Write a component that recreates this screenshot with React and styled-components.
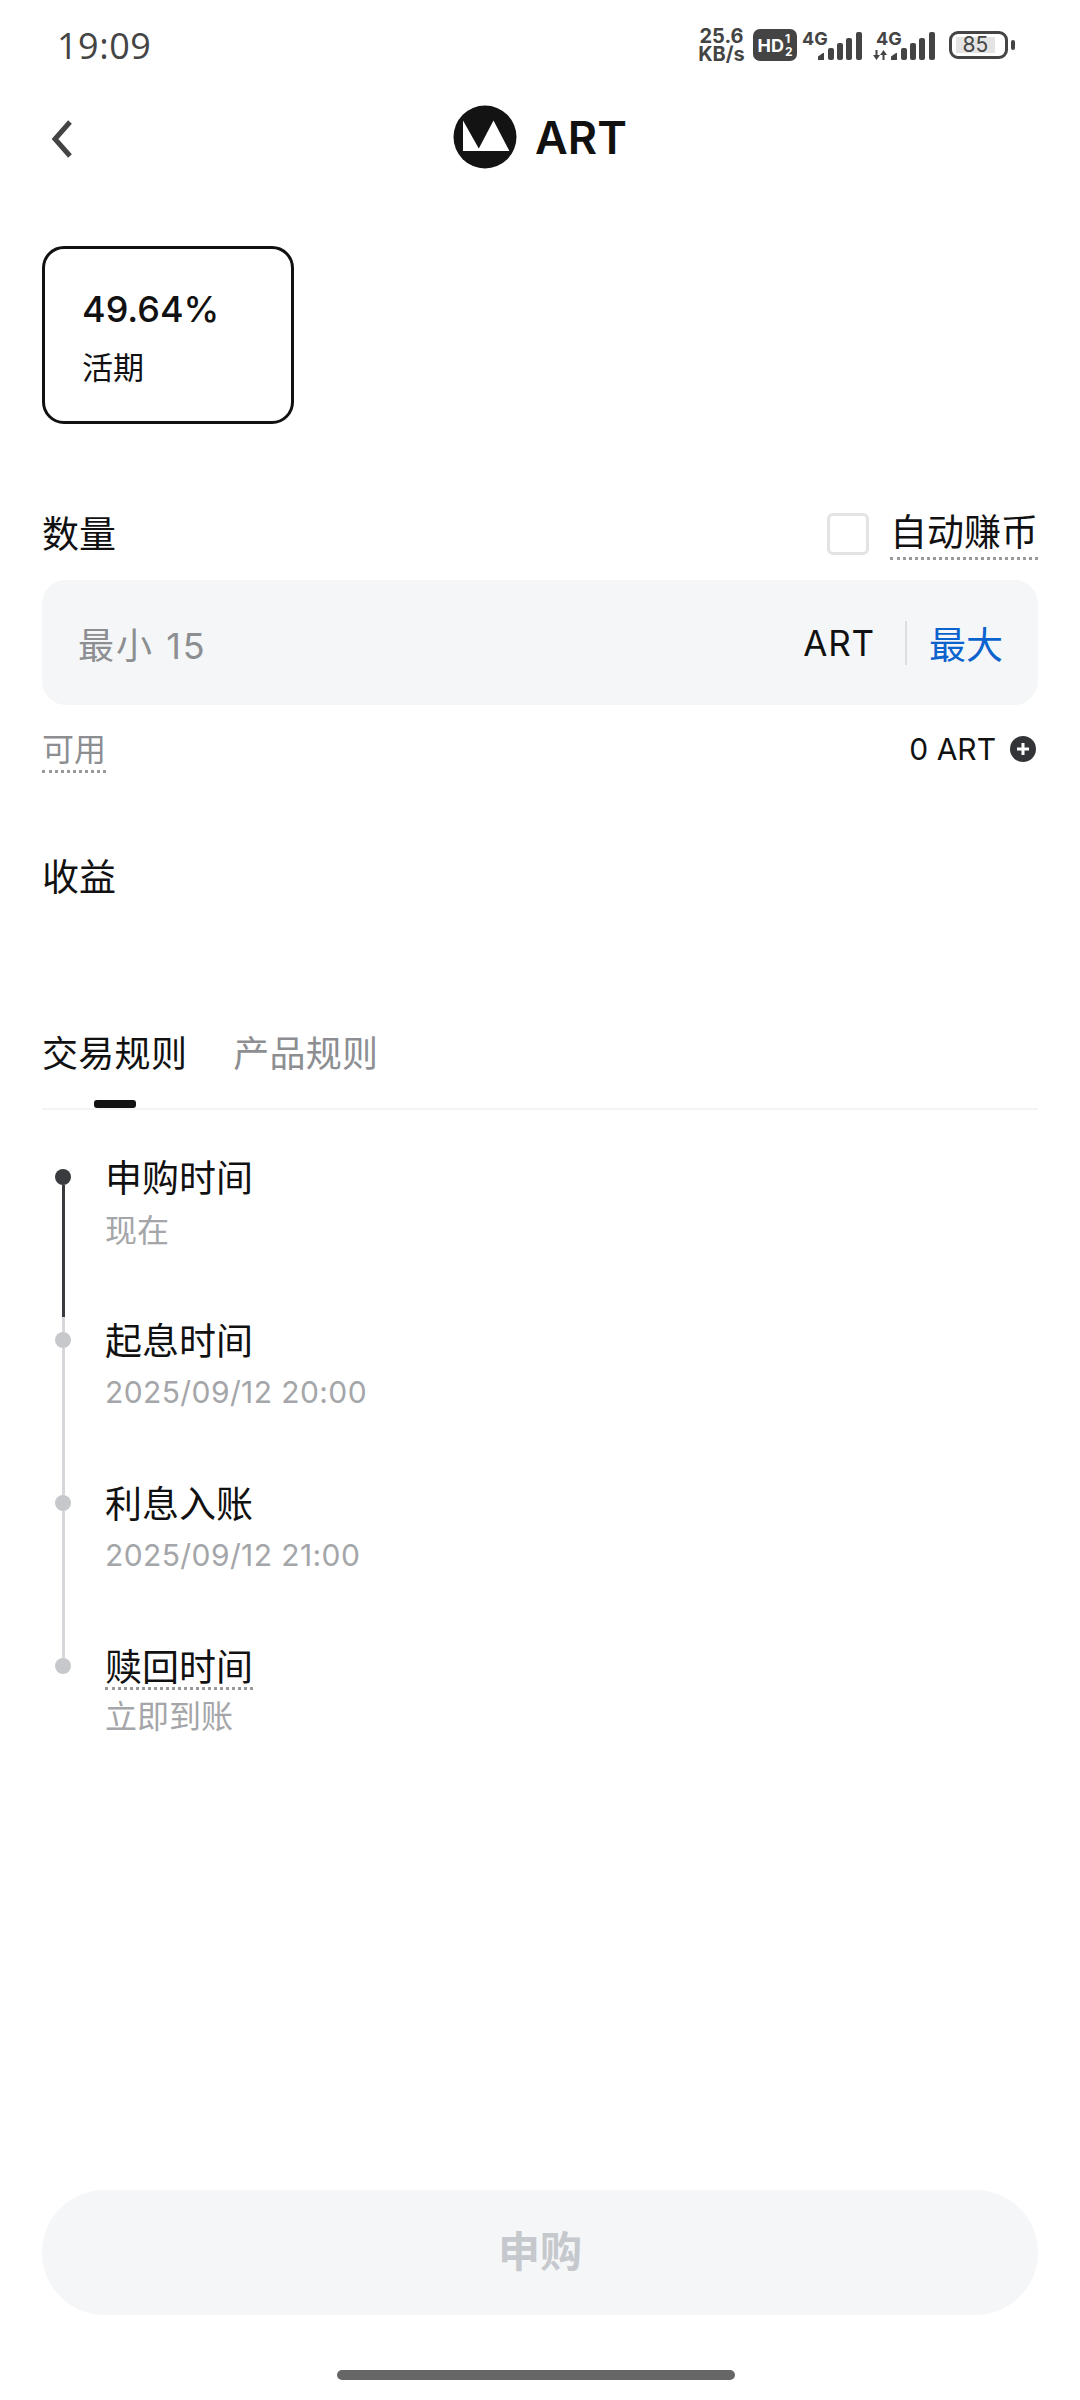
import React from "react";
import styled, { createGlobalStyle } from "styled-components";

const CJK = `Inter, "Noto Sans CJK SC", sans-serif`;

const GlobalStyle = createGlobalStyle`
  html, body {
    margin: 0;
    padding: 0;
    background: #fff;
  }
  body {
    font-family: ${CJK};
    color: #111;
  }
`;

const Page = styled.div`
  width: 1080px;
  height: 2400px;
  display: flex;
  flex-direction: column;
  overflow: hidden;
  background: #fff;
`;

/* status bar */
const StatusBar = styled.div`
  height: 90px;
  display: flex;
  align-items: center;
  justify-content: space-between;
  padding: 0 65px 0 57px;
  box-sizing: border-box;
  color: #444;
`;

const Clock = styled.div`
  font-family: "Open Sans", sans-serif;
  font-size: 36px;
  letter-spacing: 0.5px;
  color: #444;
`;

const StatusIcons = styled.div`
  display: flex;
  align-items: center;
  height: 40px;
`;

const Speed = styled.div`
  width: 47px;
  display: flex;
  flex-direction: column;
  align-items: center;
  font-size: 20px;
  line-height: 18px;
  font-weight: 700;
  color: #444;
  margin-right: 8px;
`;

const SpeedLine = styled.div`
  height: 18px;
`;

const HdBadge = styled.div`
  width: 44px;
  height: 32px;
  border-radius: 7px;
  background: #444;
  color: #fff;
  display: flex;
  align-items: center;
  justify-content: center;
  font-size: 18px;
  font-weight: 700;
  margin-right: 5px;
`;

const HdStack = styled.span`
  display: flex;
  flex-direction: column;
  font-size: 12px;
  line-height: 13px;
  margin-left: 1px;
`;

const Signal = styled.div`
  position: relative;
  width: ${(p) => p.$w}px;
  height: 30px;
  margin-right: ${(p) => p.$mr}px;
  padding-left: ${(p) => p.$pl || 0}px;
  box-sizing: border-box;
  font-size: 18px;
  font-weight: 700;
  line-height: 17px;
  color: #444;
`;

const SignalBars = styled.svg`
  position: absolute;
  right: 0;
  bottom: 0;
`;

const Battery = styled.div`
  display: flex;
  align-items: center;
  gap: 3px;
`;

const BatteryBody = styled.div`
  width: 59px;
  height: 28px;
  box-sizing: border-box;
  border: 3px solid #444;
  border-radius: 9px;
  padding: 3px 4px;
  display: flex;
`;

const BatteryFill = styled.div`
  width: 39px;
  background: #e4e4e4;
  font-size: 21px;
  line-height: 16px;
  text-align: center;
  color: #444;
`;

const BatteryCap = styled.div`
  width: 4px;
  height: 10px;
  border-radius: 2px;
  background: #444;
`;

/* nav */
const NavBar = styled.div`
  height: 96px;
  position: relative;
  display: flex;
  align-items: center;
  justify-content: center;
  gap: 18px;
  margin-top: -1px;
`;

const BackButton = styled.svg`
  position: absolute;
  left: 50px;
  top: 30px;
`;

const CoinName = styled.div`
  font-size: 45px;
  font-weight: 600;
  color: #111;
`;

const Content = styled.div`
  padding: 0 42px;
  display: flex;
  flex-direction: column;
  flex: 1;
`;

const RateCard = styled.div`
  width: 252px;
  height: 178px;
  margin-top: 61px;
  box-sizing: border-box;
  border: 3px solid #111;
  border-radius: 22px;
  padding: 38px 0 0 37px;
`;

const RateValue = styled.div`
  font-size: 36px;
  line-height: 44px;
  font-weight: 500;
`;

const RateLabel = styled.div`
  font-size: 31px;
  line-height: 40px;
  margin-top: 17px;
`;

const AmountHead = styled.div`
  display: flex;
  align-items: center;
  justify-content: space-between;
  height: 59px;
  margin-top: 80px;
`;

const Label = styled.div`
  font-size: 37px;
  line-height: 48px;
  margin-top: 2px;
`;

const AutoEarn = styled.div`
  display: flex;
  align-items: center;
  gap: 21px;
`;

const Checkbox = styled.div`
  width: 42px;
  height: 42px;
  box-sizing: border-box;
  border: 3px solid #e2e3e5;
  border-radius: 6px;
  background: #fff;
`;

const Dotted = styled.span`
  display: inline-block;
  border-bottom: 3px dotted #999;
  line-height: ${(p) => p.$lh || 46}px;
`;

const AmountInput = styled.div`
  height: 125px;
  margin-top: 17px;
  background: #f4f6f7;
  border-radius: 24px;
  padding: 0 35px 0 36px;
  display: flex;
  align-items: center;
`;

const Placeholder = styled.div`
  flex: 1;
  font-size: 36px;
  letter-spacing: 2px;
  color: #8c8e92;
`;

const Unit = styled.div`
  font-size: 35px;
  letter-spacing: 0.8px;
  color: #111;
`;

const InputDivider = styled.div`
  width: 2px;
  height: 44px;
  background: #dcdee1;
  margin: 0 22px 0 30px;
`;

const MaxLink = styled.div`
  font-size: 37px;
  color: #0b63ce;
`;

const AvailableRow = styled.div`
  display: flex;
  align-items: center;
  justify-content: space-between;
  margin-top: 24px;
  height: 44px;
`;

const AvailableLabel = styled.div`
  font-size: 32px;
  color: #8c8e92;
`;

const Balance = styled.div`
  display: flex;
  align-items: center;
  gap: 14px;
  font-size: 30px;
  color: #111;
  padding-right: 2px;
  margin-top: -4px;
`;

const EarnLabel = styled(Label)`
  margin-top: 81px;
`;

const Tabs = styled.div`
  display: flex;
  gap: 46px;
  margin-top: 125px;
  height: 81px;
  border-bottom: 2px solid #f3f4f5;
`;

const Tab = styled.div`
  position: relative;
  font-size: 36px;
  letter-spacing: 0.3px;
  line-height: 54px;
  color: ${(p) => (p.$active ? "#111" : "#8c8e92")};
`;

const TabMark = styled.div`
  position: absolute;
  left: 52px;
  top: 73px;
  width: 42px;
  height: 8px;
  border-radius: 3px;
  background: #111;
`;

/* timeline */
const Timeline = styled.div`
  margin-top: 59px;
  padding-left: 13px;
  display: flex;
  flex-direction: column;
`;

const Step = styled.div`
  display: flex;
  gap: 34px;
  height: ${(p) => (p.$last ? "auto" : "163px")};
`;

const Rail = styled.div`
  width: 16px;
  display: flex;
  flex-direction: column;
  align-items: center;
`;

const Dot = styled.div`
  width: 16px;
  height: 16px;
  flex: none;
  border-radius: 50%;
  background: ${(p) => (p.$active ? "#3a3b3f" : "#c6c8cb")};
`;

const Segment = styled.div`
  width: 3px;
  flex: 1;
  background: ${(p) =>
    p.$active
      ? "linear-gradient(#3a3b3f 0 132px, #d6d7da 132px)"
      : "#d6d7da"};
`;

const StepBody = styled.div`
  margin-top: -15px;
`;

const StepTitle = styled.div`
  font-size: 37px;
  line-height: 50px;
  color: #111;
`;

const StepSub = styled.div`
  font-size: ${(p) => (p.$date ? 30 : 32)}px;
  letter-spacing: ${(p) => (p.$date ? 0.4 : 0)}px;
  line-height: 40px;
  margin-top: ${(p) => (p.$tight ? 4 : p.$date ? 5 : 7)}px;
  color: #a4a6a9;
`;

const Footer = styled.div`
  padding: 0 42px;
  display: flex;
  flex-direction: column;
  align-items: center;
`;

const SubmitButton = styled.div`
  width: 100%;
  height: 125px;
  box-sizing: border-box;
  padding-bottom: 8px;
  border-radius: 63px;
  background: #f4f6f7;
  display: flex;
  align-items: center;
  justify-content: center;
  font-size: 42px;
  font-weight: 700;
  color: #c5c8cc;
`;

const HomeBar = styled.div`
  width: 398px;
  height: 10px;
  border-radius: 5px;
  background: #666;
  margin: 55px 8px 20px 0;
`;

function SignalIcon({ arrows }) {
  return (
    <SignalBars width="62" height="28" viewBox="0 0 62 28">
      {arrows && (
        <path
          d="M0 23h7l-3.500 5z M2.500 18h2v6h-2z M7 23l3.500-5 3.500 5z M9.500 22h2v6h-2z"
          fill="#444"
        />
      )}
      <path d="M18 28v-3.500l5-3.500h1v7z" fill="#444" />
      <rect x="28" y="16" width="6" height="12" rx="2" fill="#444" />
      <rect x="37" y="11" width="6" height="17" rx="2" fill="#444" />
      <rect x="46" y="6" width="6" height="22" rx="2" fill="#444" />
      <rect x="56" y="0" width="6" height="28" rx="2" fill="#444" />
    </SignalBars>
  );
}

function Logo() {
  return (
    <svg width="64" height="64" viewBox="0 0 64 64">
      <circle cx="32" cy="32" r="31.5" fill="#131313" />
      <path d="M10 15.500 L25.800 43.500 L40.500 15.500 L56.400 46 L10 46 Z" fill="#fff" />
    </svg>
  );
}

function PlusCircle() {
  return (
    <svg width="26" height="26" viewBox="0 0 26 26">
      <circle cx="13" cy="13" r="13" fill="#333438" />
      <path d="M13 7v12M7 13h12" stroke="#fff" strokeWidth="3" />
    </svg>
  );
}

export default function App() {
  return (
    <Page>
      <GlobalStyle />
      <StatusBar>
        <Clock>19:09</Clock>
        <StatusIcons>
          <Speed>
            <SpeedLine>25.6</SpeedLine>
            <SpeedLine>KB/s</SpeedLine>
          </Speed>
          <HdBadge>
            HD
            <HdStack>
              <span>1</span>
              <span>2</span>
            </HdStack>
          </HdBadge>
          <Signal $w={60} $mr={12}>
            4G
            <SignalIcon />
          </Signal>
          <Signal $w={61} $mr={14} $pl={2}>
            4G
            <SignalIcon arrows />
          </Signal>
          <Battery>
            <BatteryBody>
              <BatteryFill>85</BatteryFill>
            </BatteryBody>
            <BatteryCap />
          </Battery>
        </StatusIcons>
      </StatusBar>

      <NavBar>
        <BackButton width="24" height="40" viewBox="0 0 24 40">
          <path d="M20 3 L5 20 L20 37" fill="none" stroke="#444" strokeWidth="5" />
        </BackButton>
        <Logo />
        <CoinName>ART</CoinName>
      </NavBar>

      <Content>
        <RateCard>
          <RateValue>49.64%</RateValue>
          <RateLabel>活期</RateLabel>
        </RateCard>

        <AmountHead>
          <Label>数量</Label>
          <AutoEarn>
            <Checkbox />
            <Dotted>
              <Label>自动赚币</Label>
            </Dotted>
          </AutoEarn>
        </AmountHead>

        <AmountInput>
          <Placeholder>最小 15</Placeholder>
          <Unit>ART</Unit>
          <InputDivider />
          <MaxLink>最大</MaxLink>
        </AmountInput>

        <AvailableRow>
          <AvailableLabel>
            <Dotted $lh={40}>可用</Dotted>
          </AvailableLabel>
          <Balance>
            0 ART
            <PlusCircle />
          </Balance>
        </AvailableRow>

        <EarnLabel>收益</EarnLabel>

        <Tabs>
          <Tab $active>
            交易规则
            <TabMark />
          </Tab>
          <Tab>产品规则</Tab>
        </Tabs>

        <Timeline>
          <Step>
            <Rail>
              <Dot $active />
              <Segment $active />
            </Rail>
            <StepBody>
              <StepTitle>申购时间</StepTitle>
              <StepSub>现在</StepSub>
            </StepBody>
          </Step>
          <Step>
            <Rail>
              <Dot />
              <Segment />
            </Rail>
            <StepBody>
              <StepTitle>起息时间</StepTitle>
              <StepSub $date>2025/09/12 20:00</StepSub>
            </StepBody>
          </Step>
          <Step>
            <Rail>
              <Dot />
              <Segment />
            </Rail>
            <StepBody>
              <StepTitle>利息入账</StepTitle>
              <StepSub $date>2025/09/12 21:00</StepSub>
            </StepBody>
          </Step>
          <Step $last>
            <Rail>
              <Dot />
            </Rail>
            <StepBody>
              <StepTitle>
                <Dotted $lh={38}>赎回时间</Dotted>
              </StepTitle>
              <StepSub $tight>立即到账</StepSub>
            </StepBody>
          </Step>
        </Timeline>
      </Content>

      <Footer>
        <SubmitButton>申购</SubmitButton>
        <HomeBar />
      </Footer>
    </Page>
  );
}
